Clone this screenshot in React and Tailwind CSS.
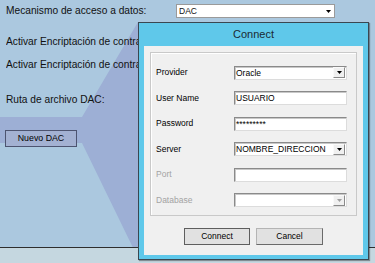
import React from 'react';

const ROWS = [
  { label: 'Provider', value: 'Oracle', combo: true },
  { label: 'User Name', value: 'USUARIO' },
  { label: 'Password', value: '*********' },
  { label: 'Server', value: 'NOMBRE_DIRECCION', combo: true },
  { label: 'Port', value: '', disabled: true },
  { label: 'Database', value: '', combo: true, disabled: true },
];

function Arrow({ disabled }) {
  return (
    <svg width="5" height="3" viewBox="0 0 5 3">
      <path d="M0 0h5L2.5 3z" fill={disabled ? '#a0a0a0' : '#000'} />
    </svg>
  );
}

function Field({ value, combo, disabled }) {
  return (
    <div className="w-[113px] h-[14px] flex items-center bg-white border border-[#8a8a8a] border-r-[#dcdcdc] border-b-[#dcdcdc] shadow-[inset_1px_1px_0_#c8c8c8]">
      <span className="flex-1 pl-[1px] text-[8.5px] leading-[12px] text-black whitespace-nowrap overflow-hidden">{value}</span>
      {combo && (
        <div className="w-[12px] h-[11px] mr-[1px] flex items-center justify-center bg-[#f0f0f0] border border-[#fafafa] border-r-[#8a8a8a] border-b-[#8a8a8a]">
          <Arrow disabled={disabled} />
        </div>
      )}
    </div>
  );
}

export default function App() {
  return (
    <div className="relative w-[375px] h-[263px] overflow-hidden bg-[#abc8df] text-[#111] font-['Liberation_Sans',Arial,sans-serif]">
      {/* callout wedge from the button to the dialog */}
      <svg className="absolute left-0 top-0" width="375" height="263">
        <polygon points="0,117 82,117 138,22 138,258 82,143 0,143" fill="#9dafd5" />
      </svg>

      <div className="relative flex flex-col h-full">
        <div className="flex-1 flex flex-col pl-[6px]">
          <div className="mt-[4px] h-[14px] flex items-center">
            <span className="w-[170px] text-[10.2px] leading-[14px] whitespace-nowrap">Mecanismo de acceso a datos:</span>
            <div className="w-[159px] h-[14px] flex items-center bg-white border border-[#9a9a9a]">
              <span className="flex-1 pl-[2px] text-[8.5px] leading-[12px]">DAC</span>
              <div className="mr-[3px]"><Arrow /></div>
            </div>
          </div>
          <div className="mt-[17px] w-[132px] h-[14px] overflow-hidden text-[10.2px] leading-[14px] whitespace-nowrap">Activar Encriptación de contraseña:</div>
          <div className="mt-[9px] w-[132px] h-[14px] overflow-hidden text-[10.2px] leading-[14px] whitespace-nowrap">Activar Encriptación de contraseña DAC:</div>
          <div className="mt-[21px] h-[14px] text-[10.2px] leading-[14px] whitespace-nowrap">Ruta de archivo DAC:</div>
          <div className="mt-[17px] -ml-[1px]">
            <button className="w-[72px] h-[17px] bg-[#a3b1d2] border border-[#4d5470] text-[8.8px] leading-[15px] text-black">Nuevo DAC</button>
          </div>
        </div>
        <div className="h-[16px] border-t border-[#2e2e2e] bg-[#c5d7e0]" />
      </div>

      {/* Connect dialog */}
      <div className="absolute left-[138px] top-[22px] w-[231px] h-[238px] flex flex-col bg-[#5fc8ea] border border-[#3a4751] shadow-[1px_1px_1px_rgba(0,0,0,0.35)]">
        <div className="h-[23px] flex items-center justify-center text-[11px] text-[#1b2a33]">Connect</div>
        <div className="mx-[5px] h-[209px] bg-[#f0f0f0] flex flex-col">
          <div className="mx-[6px] mt-[6px] h-[164px] border border-[#c9c9c9] shadow-[inset_1px_1px_0_#fff] flex flex-col gap-[11.5px] pt-[12.5px] pl-[5px]">
            {ROWS.map((r) => (
              <div key={r.label} className="flex items-center h-[14px]">
                <span className={`w-[78px] text-[8.5px] ${r.disabled ? 'text-[#a3a3a3]' : 'text-black'}`}>{r.label}</span>
                <Field value={r.value} combo={r.combo} disabled={r.disabled} />
              </div>
            ))}
          </div>
          <div className="flex justify-center gap-[6px] mt-[12px]">
            <button className="w-[66px] h-[17px] bg-[#e1e1e1] border border-[#5e5e5e] text-[8.5px] text-black">Connect</button>
            <button className="w-[67px] h-[17px] bg-[#e1e1e1] border border-[#b4b4b4] border-r-[#6a6a6a] border-b-[#6a6a6a] text-[8.5px] text-black">Cancel</button>
          </div>
        </div>
      </div>
    </div>
  );
}
